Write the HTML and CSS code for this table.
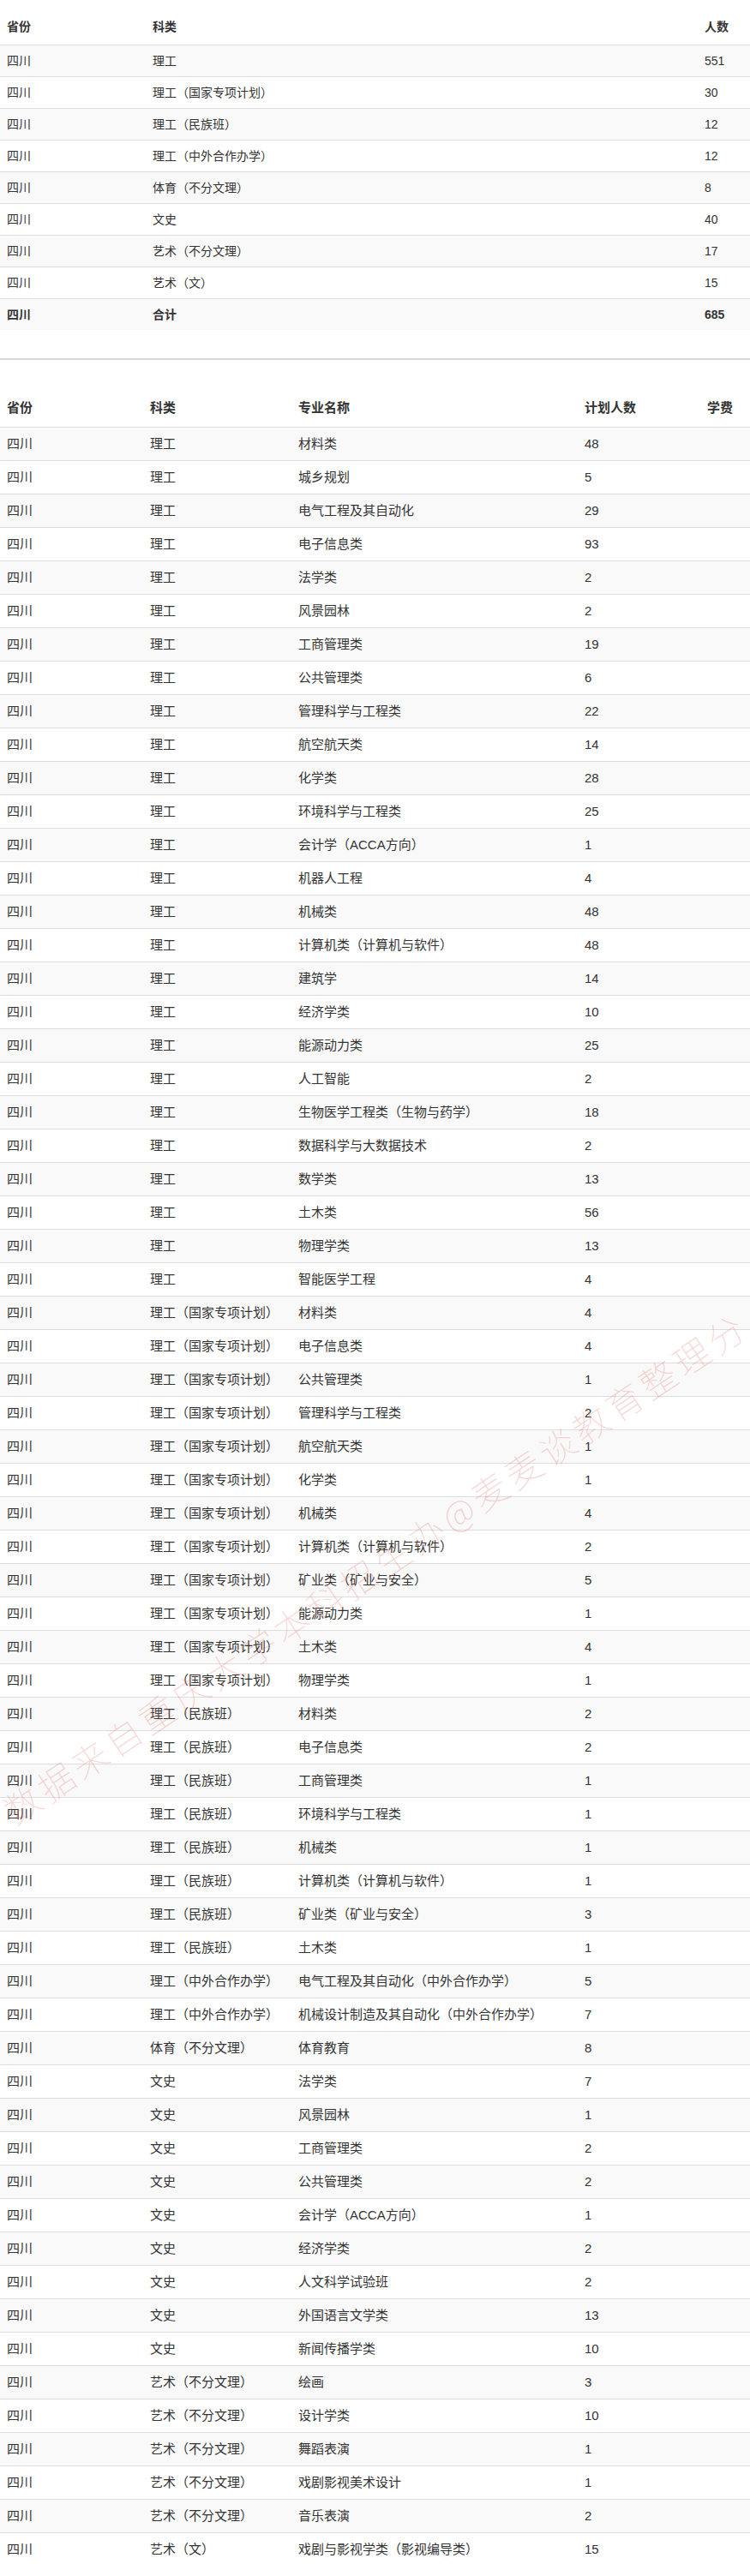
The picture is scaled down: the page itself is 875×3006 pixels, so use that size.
FILE: index.html
```html
<!DOCTYPE html>
<html lang="zh-CN">
<head>
<meta charset="utf-8">
<title>四川招生计划</title>
<link rel="stylesheet" href="styles.css">
</head>
<body>
<div class="page">
<table class="tbl t1">
  <colgroup><col class="c1"><col class="c2"><col class="c3"></colgroup>
  <thead>
    <tr><th>省份</th><th>科类</th><th>人数</th></tr>
  </thead>
  <tbody>
    <tr><td>四川</td><td>理工</td><td>551</td></tr>
    <tr><td>四川</td><td>理工（国家专项计划）</td><td>30</td></tr>
    <tr><td>四川</td><td>理工（民族班）</td><td>12</td></tr>
    <tr><td>四川</td><td>理工（中外合作办学）</td><td>12</td></tr>
    <tr><td>四川</td><td>体育（不分文理）</td><td>8</td></tr>
    <tr><td>四川</td><td>文史</td><td>40</td></tr>
    <tr><td>四川</td><td>艺术（不分文理）</td><td>17</td></tr>
    <tr><td>四川</td><td>艺术（文）</td><td>15</td></tr>
    <tr class="total"><td>四川</td><td>合计</td><td>685</td></tr>
  </tbody>
</table>
<hr class="sep">
<table class="tbl t2">
  <colgroup><col class="d1"><col class="d2"><col class="d3"><col class="d4"><col class="d5"></colgroup>
  <thead>
    <tr><th>省份</th><th>科类</th><th>专业名称</th><th>计划人数</th><th>学费</th></tr>
  </thead>
  <tbody>
    <tr><td>四川</td><td>理工</td><td>材料类</td><td>48</td><td></td></tr>
    <tr><td>四川</td><td>理工</td><td>城乡规划</td><td>5</td><td></td></tr>
    <tr><td>四川</td><td>理工</td><td>电气工程及其自动化</td><td>29</td><td></td></tr>
    <tr><td>四川</td><td>理工</td><td>电子信息类</td><td>93</td><td></td></tr>
    <tr><td>四川</td><td>理工</td><td>法学类</td><td>2</td><td></td></tr>
    <tr><td>四川</td><td>理工</td><td>风景园林</td><td>2</td><td></td></tr>
    <tr><td>四川</td><td>理工</td><td>工商管理类</td><td>19</td><td></td></tr>
    <tr><td>四川</td><td>理工</td><td>公共管理类</td><td>6</td><td></td></tr>
    <tr><td>四川</td><td>理工</td><td>管理科学与工程类</td><td>22</td><td></td></tr>
    <tr><td>四川</td><td>理工</td><td>航空航天类</td><td>14</td><td></td></tr>
    <tr><td>四川</td><td>理工</td><td>化学类</td><td>28</td><td></td></tr>
    <tr><td>四川</td><td>理工</td><td>环境科学与工程类</td><td>25</td><td></td></tr>
    <tr><td>四川</td><td>理工</td><td>会计学（ACCA方向）</td><td>1</td><td></td></tr>
    <tr><td>四川</td><td>理工</td><td>机器人工程</td><td>4</td><td></td></tr>
    <tr><td>四川</td><td>理工</td><td>机械类</td><td>48</td><td></td></tr>
    <tr><td>四川</td><td>理工</td><td>计算机类（计算机与软件）</td><td>48</td><td></td></tr>
    <tr><td>四川</td><td>理工</td><td>建筑学</td><td>14</td><td></td></tr>
    <tr><td>四川</td><td>理工</td><td>经济学类</td><td>10</td><td></td></tr>
    <tr><td>四川</td><td>理工</td><td>能源动力类</td><td>25</td><td></td></tr>
    <tr><td>四川</td><td>理工</td><td>人工智能</td><td>2</td><td></td></tr>
    <tr><td>四川</td><td>理工</td><td>生物医学工程类（生物与药学）</td><td>18</td><td></td></tr>
    <tr><td>四川</td><td>理工</td><td>数据科学与大数据技术</td><td>2</td><td></td></tr>
    <tr><td>四川</td><td>理工</td><td>数学类</td><td>13</td><td></td></tr>
    <tr><td>四川</td><td>理工</td><td>土木类</td><td>56</td><td></td></tr>
    <tr><td>四川</td><td>理工</td><td>物理学类</td><td>13</td><td></td></tr>
    <tr><td>四川</td><td>理工</td><td>智能医学工程</td><td>4</td><td></td></tr>
    <tr><td>四川</td><td>理工（国家专项计划）</td><td>材料类</td><td>4</td><td></td></tr>
    <tr><td>四川</td><td>理工（国家专项计划）</td><td>电子信息类</td><td>4</td><td></td></tr>
    <tr><td>四川</td><td>理工（国家专项计划）</td><td>公共管理类</td><td>1</td><td></td></tr>
    <tr><td>四川</td><td>理工（国家专项计划）</td><td>管理科学与工程类</td><td>2</td><td></td></tr>
    <tr><td>四川</td><td>理工（国家专项计划）</td><td>航空航天类</td><td>1</td><td></td></tr>
    <tr><td>四川</td><td>理工（国家专项计划）</td><td>化学类</td><td>1</td><td></td></tr>
    <tr><td>四川</td><td>理工（国家专项计划）</td><td>机械类</td><td>4</td><td></td></tr>
    <tr><td>四川</td><td>理工（国家专项计划）</td><td>计算机类（计算机与软件）</td><td>2</td><td></td></tr>
    <tr><td>四川</td><td>理工（国家专项计划）</td><td>矿业类（矿业与安全）</td><td>5</td><td></td></tr>
    <tr><td>四川</td><td>理工（国家专项计划）</td><td>能源动力类</td><td>1</td><td></td></tr>
    <tr><td>四川</td><td>理工（国家专项计划）</td><td>土木类</td><td>4</td><td></td></tr>
    <tr><td>四川</td><td>理工（国家专项计划）</td><td>物理学类</td><td>1</td><td></td></tr>
    <tr><td>四川</td><td>理工（民族班）</td><td>材料类</td><td>2</td><td></td></tr>
    <tr><td>四川</td><td>理工（民族班）</td><td>电子信息类</td><td>2</td><td></td></tr>
    <tr><td>四川</td><td>理工（民族班）</td><td>工商管理类</td><td>1</td><td></td></tr>
    <tr><td>四川</td><td>理工（民族班）</td><td>环境科学与工程类</td><td>1</td><td></td></tr>
    <tr><td>四川</td><td>理工（民族班）</td><td>机械类</td><td>1</td><td></td></tr>
    <tr><td>四川</td><td>理工（民族班）</td><td>计算机类（计算机与软件）</td><td>1</td><td></td></tr>
    <tr><td>四川</td><td>理工（民族班）</td><td>矿业类（矿业与安全）</td><td>3</td><td></td></tr>
    <tr><td>四川</td><td>理工（民族班）</td><td>土木类</td><td>1</td><td></td></tr>
    <tr><td>四川</td><td>理工（中外合作办学）</td><td>电气工程及其自动化（中外合作办学）</td><td>5</td><td></td></tr>
    <tr><td>四川</td><td>理工（中外合作办学）</td><td>机械设计制造及其自动化（中外合作办学）</td><td>7</td><td></td></tr>
    <tr><td>四川</td><td>体育（不分文理）</td><td>体育教育</td><td>8</td><td></td></tr>
    <tr><td>四川</td><td>文史</td><td>法学类</td><td>7</td><td></td></tr>
    <tr><td>四川</td><td>文史</td><td>风景园林</td><td>1</td><td></td></tr>
    <tr><td>四川</td><td>文史</td><td>工商管理类</td><td>2</td><td></td></tr>
    <tr><td>四川</td><td>文史</td><td>公共管理类</td><td>2</td><td></td></tr>
    <tr><td>四川</td><td>文史</td><td>会计学（ACCA方向）</td><td>1</td><td></td></tr>
    <tr><td>四川</td><td>文史</td><td>经济学类</td><td>2</td><td></td></tr>
    <tr><td>四川</td><td>文史</td><td>人文科学试验班</td><td>2</td><td></td></tr>
    <tr><td>四川</td><td>文史</td><td>外国语言文学类</td><td>13</td><td></td></tr>
    <tr><td>四川</td><td>文史</td><td>新闻传播学类</td><td>10</td><td></td></tr>
    <tr><td>四川</td><td>艺术（不分文理）</td><td>绘画</td><td>3</td><td></td></tr>
    <tr><td>四川</td><td>艺术（不分文理）</td><td>设计学类</td><td>10</td><td></td></tr>
    <tr><td>四川</td><td>艺术（不分文理）</td><td>舞蹈表演</td><td>1</td><td></td></tr>
    <tr><td>四川</td><td>艺术（不分文理）</td><td>戏剧影视美术设计</td><td>1</td><td></td></tr>
    <tr><td>四川</td><td>艺术（不分文理）</td><td>音乐表演</td><td>2</td><td></td></tr>
    <tr><td>四川</td><td>艺术（文）</td><td>戏剧与影视学类（影视编导类）</td><td>15</td><td></td></tr>
  </tbody>
</table>
<div class="watermark">数据来自重庆大学本科招生办@麦麦谈教育整理分</div>
</div>
</body>
</html>
```

FILE: styles.css
```css
html, body {
  margin: 0;
  padding: 0;
  background: #fff;
}
body {
  font-family: "Liberation Sans", Arial, "Noto Sans CJK SC", sans-serif;
  color: #333;
}
.page {
  position: relative;
  width: 875px;
  overflow: hidden;
  padding-bottom: 12px;
}
.tbl {
  width: 875px;
  border-collapse: collapse;
  border-spacing: 0;
  table-layout: fixed;
}
.tbl th,
.tbl td {
  text-align: left;
  vertical-align: top;
  padding: 8px;
  white-space: nowrap;
}
.tbl th {
  font-weight: bold;
}
.tbl td {
  border-top: 1px solid #ddd;
}
.tbl tbody tr:nth-child(odd) {
  background: #f9f9f9;
}

.t1 {
  margin-top: 13px;
  font-size: 14px;
  line-height: 20px;
}
.t1 th {
  padding-bottom: 11px;
}
.t1 .c1 { width: 170px; }
.t1 .c2 { width: 644px; }
.t1 .c3 { width: 61px; }
.t1 .total td {
  font-weight: bold;
}

.sep {
  margin: 33px 0 0;
  border: 0;
  border-top: 2px solid #d6d6d6;
  height: 0;
}

.t2 {
  margin-top: 37px;
  font-size: 15px;
  line-height: 22px;
}
.t2 th {
  padding-bottom: 11px;
}
.t2 .d1 { width: 167px; }
.t2 .d2 { width: 173px; }
.t2 .d3 { width: 334px; }
.t2 .d4 { width: 143px; }
.t2 .d5 { width: 58px; }

.watermark {
  position: absolute;
  left: 8px;
  top: 2095px;
  font-family: "Noto Sans CJK SC", sans-serif;
  font-weight: 100;
  font-size: 42px;
  line-height: 42px;
  letter-spacing: 5.2px;
  white-space: nowrap;
  color: rgba(230, 110, 110, 0.3);
  transform-origin: 0 50%;
  transform: rotate(-33.8deg);
  pointer-events: none;
}
```
